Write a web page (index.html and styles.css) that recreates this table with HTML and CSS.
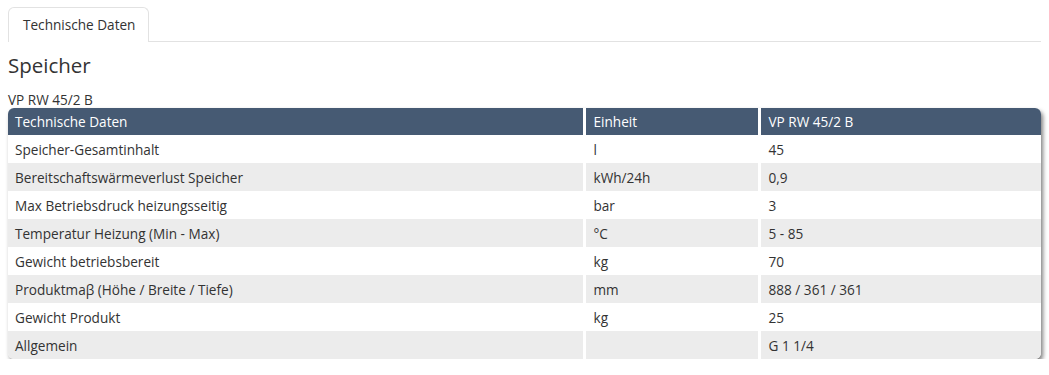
FILE: index.html
```html
<!DOCTYPE html>
<html lang="de">
<head>
<meta charset="utf-8">
<title>Technische Daten</title>
<link rel="stylesheet" href="styles.css">
</head>
<body>
<div class="tabs">
  <div class="tab">Technische Daten</div>
  <div class="tab-rest"></div>
</div>
<h2 class="title">Speicher</h2>
<div class="model">VP RW 45/2 B</div>
<div class="table-wrap">
  <table class="data">
    <thead>
      <tr><th class="c1">Technische Daten</th><th class="c2">Einheit</th><th class="c3">VP RW 45/2 B</th></tr>
    </thead>
    <tbody>
      <tr><td>Speicher-Gesamtinhalt</td><td>l</td><td>45</td></tr>
      <tr><td>Bereitschaftswärmeverlust Speicher</td><td>kWh/24h</td><td>0,9</td></tr>
      <tr><td>Max Betriebsdruck heizungsseitig</td><td>bar</td><td>3</td></tr>
      <tr><td>Temperatur Heizung (Min - Max)</td><td>°C</td><td>5 - 85</td></tr>
      <tr><td>Gewicht betriebsbereit</td><td>kg</td><td>70</td></tr>
      <tr><td>Produktmaβ (Höhe / Breite / Tiefe)</td><td>mm</td><td>888 / 361 / 361</td></tr>
      <tr><td>Gewicht Produkt</td><td>kg</td><td>25</td></tr>
      <tr><td>Allgemein</td><td></td><td>G 1 1/4</td></tr>
    </tbody>
  </table>
</div>
</body>
</html>
```
FILE: styles.css
```css
html, body {
  margin: 0;
  padding: 0;
  background: #fff;
}
body {
  padding: 7px 8px 0 8px;
  font-family: "Open Sans", "Liberation Sans", sans-serif;
  font-size: 13.6px;
  color: #333;
}
.tabs {
  display: flex;
  align-items: flex-end;
  height: 35px;
}
.tab {
  flex: none;
  box-sizing: border-box;
  height: 35px;
  width: 141px;
  border: 1px solid #e2e2e2;
  border-bottom: none;
  border-radius: 6px 6px 0 0;
  padding: 0 0 0 14px;
  line-height: 33px;
  font-size: 13.6px;
  white-space: nowrap;
  color: #333;
}
.tab-rest {
  flex: 1;
  border-bottom: 1px solid #e2e2e2;
}
.title {
  margin: 10px 0 0 0;
  font-size: 20.5px;
  font-weight: normal;
  line-height: 27px;
  color: #333;
}
.model {
  margin-top: 13px;
  line-height: 16px;
  font-size: 13.6px;
}
.table-wrap {
  margin-top: 0;
  border-radius: 6px;
  overflow: hidden;
  box-shadow: 2px 3px 4px rgba(0,0,0,0.5);
  width: 1033px;
}
.data {
  width: 100%;
  border-collapse: collapse;
  table-layout: fixed;
}
.data th, .data td {
  text-align: left;
  font-weight: normal;
  padding: 0 7px;
  height: 28px;
  box-sizing: border-box;
  white-space: nowrap;
}
.data th {
  background: #465a73;
  color: #fff;
  height: 27px;
}
.data th + th, .data td + td {
  border-left: 3px solid #fff;
  padding-left: 8px;
}
.c1 { width: 576px; }
.c2 { width: 175px; }
.data tbody tr:nth-child(odd) td { background: #fff; }
.data tbody tr:nth-child(even) td { background: #ececec; }
```
